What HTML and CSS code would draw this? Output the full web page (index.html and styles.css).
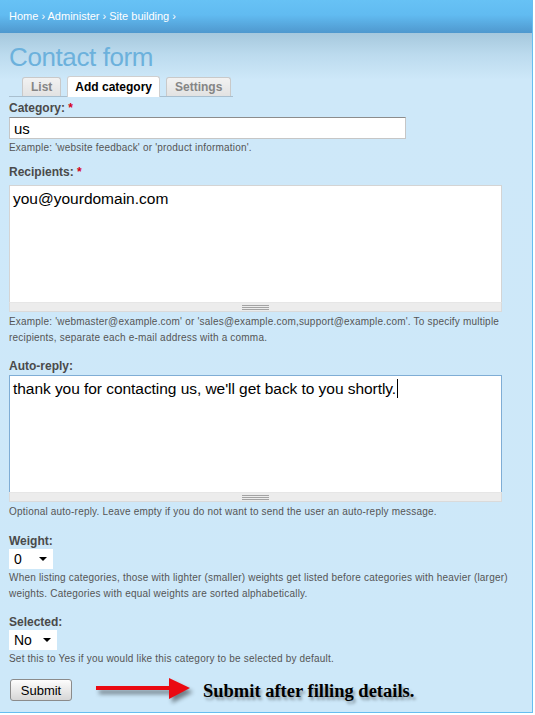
FILE: index.html
```html
<!DOCTYPE html>
<html lang="en">
<head>
  <meta charset="UTF-8">
  <title>Contact form</title>
  <link rel="stylesheet" href="styles.css">
</head>
<body>

<div class="page">
  <div class="header">
    <div class="breadcrumb">
      <a href="#">Home</a> › <a href="#">Administer</a> › <a href="#">Site building</a> ›
    </div>
  </div>

  <div class="content">
    <h1>Contact form</h1>

    <ul class="tabs">
      <li><a href="#">List</a></li>
      <li class="active"><a href="#">Add category</a></li>
      <li><a href="#">Settings</a></li>
    </ul>

    <form class="contact-form" onsubmit="return false">
      <div class="form-item first">
        <label>Category: <span class="req">*</span></label>
        <input class="form-text" type="text" value="us">
        <div class="description">Example: 'website feedback' or 'product information'.</div>
      </div>

      <div class="form-item tight">
        <label>Recipients: <span class="req">*</span></label>
        <div class="resizable">
          <div class="textarea">you@yourdomain.com</div>
          <div class="grippie"><span></span></div>
        </div>
        <div class="description">Example: 'webmaster@example.com' or 'sales@example.com,support@example.com'. To specify multiple recipients, separate each e-mail address with a comma.</div>
      </div>

      <div class="form-item">
        <label>Auto-reply:</label>
        <div class="resizable near">
          <div class="textarea focus">thank you for contacting us, we'll get back to you shortly.<span class="caret"></span></div>
          <div class="grippie"><span></span></div>
        </div>
        <div class="description">Optional auto-reply. Leave empty if you do not want to send the user an auto-reply message.</div>
      </div>

      <div class="form-item wide">
        <label>Weight:</label>
        <div class="select weight"><span>0</span><i class="arrow"></i></div>
        <div class="description">When listing categories, those with lighter (smaller) weights get listed before categories with heavier (larger) weights. Categories with equal weights are sorted alphabetically.</div>
      </div>

      <div class="form-item">
        <label>Selected:</label>
        <div class="select selected"><span>No</span><i class="arrow"></i></div>
        <div class="description">Set this to Yes if you would like this category to be selected by default.</div>
      </div>

      <div class="submit-row">
        <button class="form-submit" type="submit">Submit</button>
        <svg class="pointer" width="96" height="30" viewBox="0 0 96 30">
          <rect x="0" y="11" width="76" height="4" fill="#ea0a12"/>
          <polygon points="73,3 94,13 73,24" fill="#ea0a12"/>
        </svg>
        <span class="note">Submit after filling details.</span>
      </div>
    </form>
  </div>
</div>

</body>
</html>
```

FILE: styles.css
```css
body {
  margin: 0;
  background-color: #fff;
  font-family: 'Liberation Sans', Arial, sans-serif;
}

.page {
  width: 532px;
  height: 712px;
  border-right: 1px solid #66bdf0;
  border-bottom: 1px solid #66bdf0;
  background: linear-gradient(to bottom, #a6c8dd 33px, #bcdbee 55px, #cee8f9 80px, #cde8f9 100%);
}

.header {
  height: 33px;
  background: linear-gradient(to bottom, #67c2f5 0%, #61bbf1 45%, #4f98ce 100%);
}

.breadcrumb {
  padding: 10px 0 0 9px;
  font-size: 11px;
  color: #fff;
}

.breadcrumb a {
  color: #fff;
  text-decoration: none;
}

.content {
  padding: 0 9px;
}

h1 {
  margin: 8px 0 0;
  font-size: 26px;
  line-height: 32px;
  letter-spacing: -0.4px;
  font-weight: normal;
  color: #6cb1dc;
}

.tabs {
  list-style: none;
  display: flex;
  align-items: flex-end;
  gap: 6px;
  width: 211px;
  height: 20px;
  margin: 3px 0 0;
  padding: 0 0 0 13px;
  border-bottom: 1px solid #a9bfcf;
}

.tabs li {
  flex-shrink: 0;
  height: 18px;
  padding: 0 8px;
  border: 1px solid #c9c9c9;
  border-bottom: none;
  border-radius: 3px 3px 0 0;
  background: linear-gradient(to bottom, #f2f2f2, #e2e2e2);
  font-size: 12px;
  font-weight: bold;
  line-height: 19px;
  white-space: nowrap;
}

.tabs li a {
  color: #858585;
  text-decoration: none;
}

.tabs li.active {
  height: 20px;
  margin-bottom: -1px;
  padding: 0 7px;
  background: #fff;
  border-color: #cfcfcf;
  line-height: 20px;
}

.tabs li.active a {
  color: #000;
}

.form-item {
  margin-top: 13px;
}

.form-item.first {
  margin-top: 4px;
}

.form-item.tight {
  margin-top: 9px;
}

.form-item.wide {
  margin-top: 14px;
}

.form-item label {
  display: block;
  font-size: 12px;
  font-weight: bold;
  line-height: 14px;
  color: #4a4a4a;
}

.req {
  color: #d5001a;
}

.form-text {
  display: block;
  box-sizing: border-box;
  width: 397px;
  height: 22px;
  margin: 2px 0 0;
  padding: 1px 4px 0;
  border: 1px solid #c6c6c6;
  border-top-color: #8c8c8c;
  background: #fff;
  font-family: 'Liberation Sans', Arial, sans-serif;
  font-size: 15px;
  color: #000;
}

.resizable {
  width: 493px;
  margin-top: 6px;
}

.resizable.near {
  margin-top: 2px;
}

.resizable + .description {
  margin-top: 2px;
}

.textarea {
  box-sizing: border-box;
  height: 117px;
  padding: 3px 3px;
  border: 1px solid #d4d4d4;
  border-bottom: none;
  background: #fff;
  font-size: 15.5px;
  line-height: 19px;
  color: #000;
}

.textarea.focus {
  border-color: #7fadd5;
  letter-spacing: -0.05px;
}

.caret {
  display: inline-block;
  width: 1px;
  height: 19px;
  margin-left: 1px;
  vertical-align: top;
  background: #000;
}

.grippie {
  display: flex;
  justify-content: center;
  align-items: center;
  height: 8px;
  border: 1px solid #dadada;
  border-top-color: #e6e6e6;
  background: #ececec;
}

.grippie span {
  width: 27px;
  height: 5px;
  background: repeating-linear-gradient(to bottom, #a3a3a3 0, #a3a3a3 1px, transparent 1px, transparent 2px);
}

.description {
  margin-top: 1px;
  font-size: 10px;
  line-height: 16px;
  letter-spacing: 0.2px;
  color: #555;
}

.select {
  display: flex;
  align-items: center;
  justify-content: space-between;
  box-sizing: border-box;
  height: 20px;
  margin-top: 1px;
  padding: 0 6px 0 5px;
  background: #fff;
  font-size: 14px;
  color: #000;
}

.select.weight {
  width: 44px;
}

.select.selected {
  width: 48px;
}

.arrow {
  width: 0;
  height: 0;
  border-left: 4px solid transparent;
  border-right: 4px solid transparent;
  border-top: 4px solid #000;
}

.submit-row {
  display: flex;
  align-items: center;
  margin-top: 8px;
}

.form-submit {
  width: 62px;
  height: 22px;
  margin-left: 1px;
  padding: 0;
  border: 1px solid #8b8b8b;
  border-radius: 3px;
  background: linear-gradient(to bottom, #fdfdfd, #e6e6e6 60%, #d6d6d6);
  font-family: 'Liberation Sans', Arial, sans-serif;
  font-size: 13px;
  color: #000;
}

.pointer {
  margin-left: 24px;
  filter: drop-shadow(3px 4px 2px rgba(0, 0, 0, 0.45));
}

.note {
  margin-left: 11px;
  padding-top: 3px;
  font-family: 'Liberation Serif', 'Times New Roman', serif;
  font-size: 18.5px;
  font-weight: bold;
  color: #000;
  text-shadow: 2px 3px 3px rgba(0, 0, 0, 0.35);
}
```
